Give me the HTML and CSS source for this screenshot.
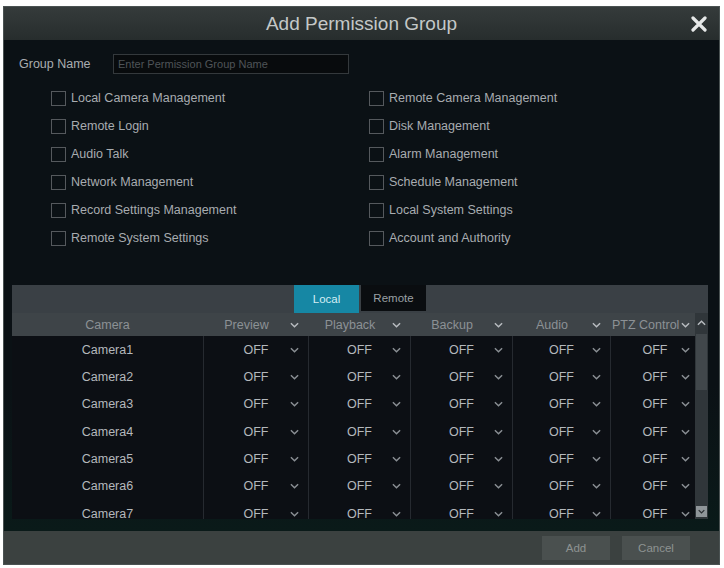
FILE: index.html
```html
<!DOCTYPE html>
<html lang="en">
<head>
    <meta charset="UTF-8">
    <title>Add Permission Group</title>
    <link rel="stylesheet" href="styles.css">
</head>
<body>
    <div class="dialog">
        <div class="title-bar">
            <span class="title">Add Permission Group</span>
            <svg class="close" width="16" height="16" viewBox="0 0 16 16">
                <path d="M2 2 L14 14 M14 2 L2 14" stroke="#e6e8e8" stroke-width="3.2" stroke-linecap="round"/>
            </svg>
        </div>

        <div class="dialog-body">
            <div class="name-row">
                <label>Group Name</label>
                <input type="text" placeholder="Enter Permission Group Name">
            </div>

            <div class="perm-grid">
                <div class="perm"><span class="box"></span>Local Camera Management</div>
                <div class="perm"><span class="box"></span>Remote Camera Management</div>
                <div class="perm"><span class="box"></span>Remote Login</div>
                <div class="perm"><span class="box"></span>Disk Management</div>
                <div class="perm"><span class="box"></span>Audio Talk</div>
                <div class="perm"><span class="box"></span>Alarm Management</div>
                <div class="perm"><span class="box"></span>Network Management</div>
                <div class="perm"><span class="box"></span>Schedule Management</div>
                <div class="perm"><span class="box"></span>Record Settings Management</div>
                <div class="perm"><span class="box"></span>Local System Settings</div>
                <div class="perm"><span class="box"></span>Remote System Settings</div>
                <div class="perm"><span class="box"></span>Account and Authority</div>
            </div>

            <div class="panel">
                <div class="tabs">
                    <span class="tab active">Local</span>
                    <span class="tab">Remote</span>
                </div>
                <div class="table-wrap">
                    <div class="table">
                        <div class="row head">
                            <div class="cell cam">Camera</div>
                            <div class="cell"><span class="val">Preview</span><svg class="chev" viewBox="0 0 10 6"><path d="M1 1 L5 5 L9 1"/></svg></div>
                            <div class="cell"><span class="val">Playback</span><svg class="chev" viewBox="0 0 10 6"><path d="M1 1 L5 5 L9 1"/></svg></div>
                            <div class="cell"><span class="val">Backup</span><svg class="chev" viewBox="0 0 10 6"><path d="M1 1 L5 5 L9 1"/></svg></div>
                            <div class="cell"><span class="val">Audio</span><svg class="chev" viewBox="0 0 10 6"><path d="M1 1 L5 5 L9 1"/></svg></div>
                            <div class="cell ptz"><span class="val">PTZ Control</span><svg class="chev" viewBox="0 0 10 6"><path d="M1 1 L5 5 L9 1"/></svg></div>
                        </div>
                        <div class="rows">
                            <div class="row">
                                <div class="cell cam">Camera1</div>
                                <div class="cell"><span class="val">OFF</span><svg class="chev" viewBox="0 0 10 6"><path d="M1 1 L5 5 L9 1"/></svg></div>
                                <div class="cell"><span class="val">OFF</span><svg class="chev" viewBox="0 0 10 6"><path d="M1 1 L5 5 L9 1"/></svg></div>
                                <div class="cell"><span class="val">OFF</span><svg class="chev" viewBox="0 0 10 6"><path d="M1 1 L5 5 L9 1"/></svg></div>
                                <div class="cell"><span class="val">OFF</span><svg class="chev" viewBox="0 0 10 6"><path d="M1 1 L5 5 L9 1"/></svg></div>
                                <div class="cell ptz"><span class="val">OFF</span><svg class="chev" viewBox="0 0 10 6"><path d="M1 1 L5 5 L9 1"/></svg></div>
                            </div>
                            <div class="row">
                                <div class="cell cam">Camera2</div>
                                <div class="cell"><span class="val">OFF</span><svg class="chev" viewBox="0 0 10 6"><path d="M1 1 L5 5 L9 1"/></svg></div>
                                <div class="cell"><span class="val">OFF</span><svg class="chev" viewBox="0 0 10 6"><path d="M1 1 L5 5 L9 1"/></svg></div>
                                <div class="cell"><span class="val">OFF</span><svg class="chev" viewBox="0 0 10 6"><path d="M1 1 L5 5 L9 1"/></svg></div>
                                <div class="cell"><span class="val">OFF</span><svg class="chev" viewBox="0 0 10 6"><path d="M1 1 L5 5 L9 1"/></svg></div>
                                <div class="cell ptz"><span class="val">OFF</span><svg class="chev" viewBox="0 0 10 6"><path d="M1 1 L5 5 L9 1"/></svg></div>
                            </div>
                            <div class="row">
                                <div class="cell cam">Camera3</div>
                                <div class="cell"><span class="val">OFF</span><svg class="chev" viewBox="0 0 10 6"><path d="M1 1 L5 5 L9 1"/></svg></div>
                                <div class="cell"><span class="val">OFF</span><svg class="chev" viewBox="0 0 10 6"><path d="M1 1 L5 5 L9 1"/></svg></div>
                                <div class="cell"><span class="val">OFF</span><svg class="chev" viewBox="0 0 10 6"><path d="M1 1 L5 5 L9 1"/></svg></div>
                                <div class="cell"><span class="val">OFF</span><svg class="chev" viewBox="0 0 10 6"><path d="M1 1 L5 5 L9 1"/></svg></div>
                                <div class="cell ptz"><span class="val">OFF</span><svg class="chev" viewBox="0 0 10 6"><path d="M1 1 L5 5 L9 1"/></svg></div>
                            </div>
                            <div class="row">
                                <div class="cell cam">Camera4</div>
                                <div class="cell"><span class="val">OFF</span><svg class="chev" viewBox="0 0 10 6"><path d="M1 1 L5 5 L9 1"/></svg></div>
                                <div class="cell"><span class="val">OFF</span><svg class="chev" viewBox="0 0 10 6"><path d="M1 1 L5 5 L9 1"/></svg></div>
                                <div class="cell"><span class="val">OFF</span><svg class="chev" viewBox="0 0 10 6"><path d="M1 1 L5 5 L9 1"/></svg></div>
                                <div class="cell"><span class="val">OFF</span><svg class="chev" viewBox="0 0 10 6"><path d="M1 1 L5 5 L9 1"/></svg></div>
                                <div class="cell ptz"><span class="val">OFF</span><svg class="chev" viewBox="0 0 10 6"><path d="M1 1 L5 5 L9 1"/></svg></div>
                            </div>
                            <div class="row">
                                <div class="cell cam">Camera5</div>
                                <div class="cell"><span class="val">OFF</span><svg class="chev" viewBox="0 0 10 6"><path d="M1 1 L5 5 L9 1"/></svg></div>
                                <div class="cell"><span class="val">OFF</span><svg class="chev" viewBox="0 0 10 6"><path d="M1 1 L5 5 L9 1"/></svg></div>
                                <div class="cell"><span class="val">OFF</span><svg class="chev" viewBox="0 0 10 6"><path d="M1 1 L5 5 L9 1"/></svg></div>
                                <div class="cell"><span class="val">OFF</span><svg class="chev" viewBox="0 0 10 6"><path d="M1 1 L5 5 L9 1"/></svg></div>
                                <div class="cell ptz"><span class="val">OFF</span><svg class="chev" viewBox="0 0 10 6"><path d="M1 1 L5 5 L9 1"/></svg></div>
                            </div>
                            <div class="row">
                                <div class="cell cam">Camera6</div>
                                <div class="cell"><span class="val">OFF</span><svg class="chev" viewBox="0 0 10 6"><path d="M1 1 L5 5 L9 1"/></svg></div>
                                <div class="cell"><span class="val">OFF</span><svg class="chev" viewBox="0 0 10 6"><path d="M1 1 L5 5 L9 1"/></svg></div>
                                <div class="cell"><span class="val">OFF</span><svg class="chev" viewBox="0 0 10 6"><path d="M1 1 L5 5 L9 1"/></svg></div>
                                <div class="cell"><span class="val">OFF</span><svg class="chev" viewBox="0 0 10 6"><path d="M1 1 L5 5 L9 1"/></svg></div>
                                <div class="cell ptz"><span class="val">OFF</span><svg class="chev" viewBox="0 0 10 6"><path d="M1 1 L5 5 L9 1"/></svg></div>
                            </div>
                            <div class="row">
                                <div class="cell cam">Camera7</div>
                                <div class="cell"><span class="val">OFF</span><svg class="chev" viewBox="0 0 10 6"><path d="M1 1 L5 5 L9 1"/></svg></div>
                                <div class="cell"><span class="val">OFF</span><svg class="chev" viewBox="0 0 10 6"><path d="M1 1 L5 5 L9 1"/></svg></div>
                                <div class="cell"><span class="val">OFF</span><svg class="chev" viewBox="0 0 10 6"><path d="M1 1 L5 5 L9 1"/></svg></div>
                                <div class="cell"><span class="val">OFF</span><svg class="chev" viewBox="0 0 10 6"><path d="M1 1 L5 5 L9 1"/></svg></div>
                                <div class="cell ptz"><span class="val">OFF</span><svg class="chev" viewBox="0 0 10 6"><path d="M1 1 L5 5 L9 1"/></svg></div>
                            </div>
                        </div>
                    </div>
                    <div class="scrollbar">
                        <svg class="sb-up" viewBox="0 0 10 6"><path d="M1 5 L5 1 L9 5"/></svg>
                        <div class="sb-track"><div class="sb-thumb"></div></div>
                        <div class="sb-down"><svg viewBox="0 0 10 6"><path d="M1 1 L5 5 L9 1"/></svg></div>
                    </div>
                </div>
            </div>
        </div>

        <div class="footer">
            <button>Add</button>
            <button>Cancel</button>
        </div>
    </div>
</body>
</html>
```

FILE: styles.css
```css
body {
    margin: 0;
    background-color: #fff;
    font-family: "Liberation Sans", Arial, sans-serif;
}
.dialog {
    margin: 6px 0 0 3px;
    width: 717px;
    height: 559px;
    box-sizing: border-box;
    border: 1px solid #4a5252;
    display: flex;
    flex-direction: column;
    background-color: #0b1115;
}
.title-bar {
    height: 33px;
    flex: none;
    display: flex;
    align-items: center;
    justify-content: center;
    background: linear-gradient(#353b3b, #272d2d);
    position: relative;
}
.title {
    color: #c4c8c8;
    font-size: 19px;
}
.close {
    position: absolute;
    right: 12px;
    top: 9px;
}
.dialog-body {
    flex: 1;
    padding: 14px 11px 12px 8px;
    background: linear-gradient(#0b1115 70%, #0a1a19);
}
.name-row {
    display: flex;
    align-items: center;
    height: 20px;
    padding-left: 7px;
}
.name-row label {
    color: #a9adb0;
    font-size: 12.5px;
    width: 94px;
}
.name-row input {
    width: 236px;
    height: 20px;
    box-sizing: border-box;
    background-color: #080b0d;
    border: 1px solid #34393c;
    color: #ccc;
    font-family: inherit;
    font-size: 11px;
    padding: 0 4px;
}
.name-row input::placeholder {
    color: #4f5458;
}
.perm-grid {
    display: grid;
    grid-template-columns: 318px 300px;
    grid-auto-rows: 28px;
    margin: 10px 0 0 39px;
}
.perm {
    display: flex;
    align-items: center;
    color: #a8acb0;
    font-size: 12.5px;
}
.box {
    width: 13px;
    height: 13px;
    border: 1px solid #55595d;
    margin-right: 5px;
}
.panel {
    margin-top: 33px;
    width: 696px;
}
.tabs {
    height: 28px;
    background-color: #3a4045;
    display: flex;
    justify-content: center;
    gap: 2px;
}
.tab {
    width: 65px;
    height: 26px;
    display: flex;
    align-items: center;
    justify-content: center;
    font-size: 11.5px;
    color: #9aa0a4;
    background-color: #0a0d10;
}
.tab.active {
    height: 28px;
    background-color: #1687a4;
    color: #d4eef4;
}
.table-wrap {
    display: flex;
}
.table {
    width: 683px;
}
.row {
    display: grid;
    grid-template-columns: 191px 105px 102px 102px 98px 85px;
    height: 27.33px;
    background-color: #0c0f14;
}
.row.head {
    height: 23px;
    background-color: #3e4448;
}
.rows {
    height: 183px;
    overflow: hidden;
}
.cell {
    display: flex;
    align-items: center;
    font-size: 12.5px;
    color: #b4b8bc;
    border-left: 1px solid #262a30;
    padding: 0 9px 0 18px;
}
.cell.cam {
    justify-content: center;
    border-left: none;
    padding: 0;
}
.head .cell {
    border-left: none;
    color: #8c9195;
    padding-left: 0;
}
.head .cell.cam {
    color: #8c9195;
}
.head .cell.ptz {
    padding-left: 2px;
}
.cell.ptz {
    padding-right: 5px;
}
.val {
    flex: 1;
    text-align: center;
}
.head .ptz .val {
    text-align: left;
}
.chev {
    width: 9px;
    height: 6px;
    flex: none;
    fill: none;
    stroke: #8a8f94;
    stroke-width: 1.6;
}
.head .chev {
    stroke: #b8bcc0;
}
.scrollbar {
    width: 13px;
    display: flex;
    flex-direction: column;
    align-items: center;
    background-color: #30363a;
}
.sb-up {
    width: 9px;
    height: 6px;
    margin: 7px 0 8px;
    fill: none;
    stroke: #b8bcc0;
    stroke-width: 1.6;
}
.sb-track {
    flex: 1;
    width: 11px;
}
.sb-thumb {
    height: 56px;
    background-color: #41474b;
}
.sb-down {
    width: 11px;
    height: 11px;
    margin-bottom: 2px;
    background-color: #8f9599;
    display: flex;
    align-items: center;
    justify-content: center;
}
.sb-down svg {
    width: 7px;
    height: 5px;
    fill: none;
    stroke: #2a2e32;
    stroke-width: 1.8;
}
.footer {
    height: 33px;
    flex: none;
    background-color: #3b4140;
    display: flex;
    justify-content: flex-end;
    align-items: center;
    gap: 12px;
    padding-right: 29px;
}
button {
    width: 68px;
    height: 24px;
    border: none;
    background-color: #4a504f;
    color: #8e9392;
    font-family: inherit;
    font-size: 11.5px;
}
```
